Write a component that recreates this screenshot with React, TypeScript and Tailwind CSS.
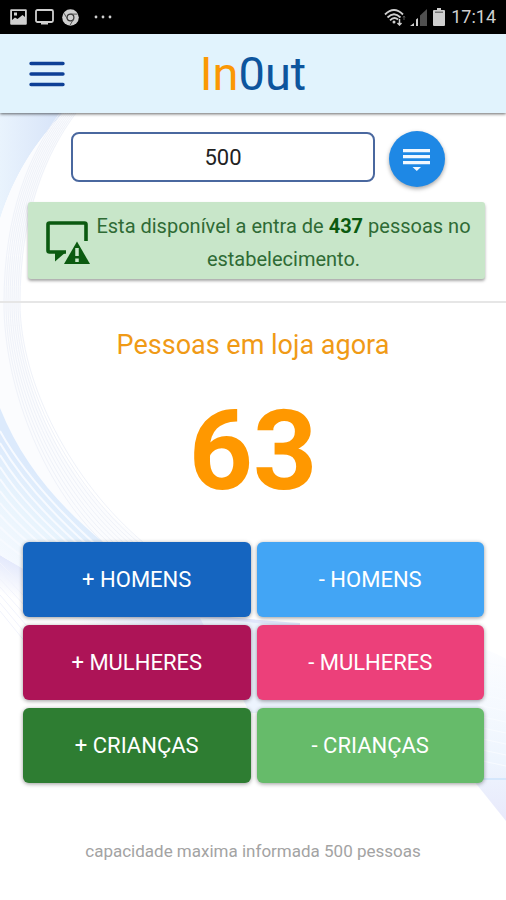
import { useState } from 'react'

const GROUPS = [
  { label: 'HOMENS', plus: 'bg-[#1565c0]', minus: 'bg-[#42a5f5]' },
  { label: 'MULHERES', plus: 'bg-[#ad1457]', minus: 'bg-[#ec407a]' },
  { label: 'CRIANÇAS', plus: 'bg-[#2e7d32]', minus: 'bg-[#66bb6a]' },
]

const range = (n: number) => Array.from({ length: n }, (_, i) => i)

/* Faint guilloche waves behind the content */
function Waves() {
  return (
    <svg className="absolute inset-0 -z-10 h-full w-full" viewBox="0 0 506 787" preserveAspectRatio="none" fill="none" aria-hidden="true">
      <defs>
        <linearGradient id="top" x1="0" y1="0" x2="1" y2="0">
          <stop offset="0" stopColor="#e9f3fd" />
          <stop offset="1" stopColor="#d6e3f8" />
        </linearGradient>
        <linearGradient id="low" gradientUnits="userSpaceOnUse" x1="50" y1="372" x2="-10" y2="440">
          <stop offset="0" stopColor="#dceafc" />
          <stop offset="0.4" stopColor="#e8f4fd" />
          <stop offset="1" stopColor="#f7faff" />
        </linearGradient>
        <linearGradient id="fold" gradientUnits="userSpaceOnUse" x1="14" y1="444" x2="0" y2="480">
          <stop offset="0" stopColor="#e0e6fb" />
          <stop offset="1" stopColor="#ffffff" />
        </linearGradient>
        <linearGradient id="side" x1="0" y1="0" x2="0" y2="1">
          <stop offset="0" stopColor="#fcfdff" />
          <stop offset="0.65" stopColor="#eef5fe" />
          <stop offset="1" stopColor="#e8e9fb" />
        </linearGradient>
      </defs>
      <path d="M0 0H63C35 30 14 62 0 106Z" fill="url(#top)" />
      <path d="M0 106C14 62 35 30 63 0H76C45 40 20 110 20 190C20 290 70 375 144 430H104C58 392 22 350 0 295Z" fill="#fbfcfe" />
      <path d="M0 442C60 480 150 500 300 510V540C160 530 60 530 24 500L0 478Z" fill="url(#fold)" />
      <path d="M0 295C22 350 58 392 104 430L200 490H80L0 442Z" fill="url(#low)" />
      <path d="M200 505C300 512 420 530 484 560V600H250Z" fill="#edf4fe" />
      <path d="M484 536C492 539 500 542 506 546V708L474 668Z" fill="url(#side)" />
      <path d="M478 666H506" stroke="#d5e7fc" strokeWidth="2" />
      {range(9).map(i => (
        <path
          key={i}
          d={`M${60 + i * 2} 0C${30 + i * 2} 40 ${4 + i * 2} 100 ${4 + i * 2} 190C${4 + i * 2} 270 ${40 + i * 4} 370 ${104 + i * 5} 430`}
          stroke="#eff2f9"
          strokeWidth="1"
        />
      ))}
      {range(10).map(i => (
        <path key={i} d={`M0 ${318 + i * 12}Q${30 - i} ${372 + i * 8} ${96 - i * 4} ${432 + i * 4}`} stroke="#f7faff" strokeWidth="2" />
      ))}
      {range(7).map(i => (
        <path key={i} d={`M0 ${450 + i * 8}L26 ${476 + i * 9}`} stroke="#f1f3fc" strokeWidth="1" />
      ))}
      {range(10).map(i => (
        <path key={i} d={`M478 ${548 + i * 11}L506 ${554 + i * 11}`} stroke="#f8fbff" strokeWidth="1" />
      ))}
    </svg>
  )
}

function StatusBar() {
  return (
    <div className="flex h-[34px] items-center justify-between bg-black px-2.5 text-[#cfcfcf]">
      <div className="flex items-center gap-2">
        <svg width="17" height="16" viewBox="0 0 17 16" aria-hidden="true">
          <path d="M1.200 .2h14.600q1 0 1 1v13.600q0 1-1 1H1.200q-1 0-1-1V1.200q0-1 1-1ZM2 2v9l3-2.500 2.500 1.500L12.500 6 15 8V2ZM4 3.500h3v3H4Z" fill="currentColor" fillRule="evenodd" />
        </svg>
        <svg width="19" height="16" viewBox="0 0 19 16" fill="none" aria-hidden="true">
          <rect x="1" y="1" width="17" height="12" rx="1.500" stroke="currentColor" strokeWidth="1.800" />
          <path d="M6 14.500h7" stroke="currentColor" strokeWidth="2" />
        </svg>
        <svg width="17" height="17" viewBox="0 0 17 17" fill="none" aria-hidden="true">
          <circle cx="8.500" cy="8.500" r="8.300" fill="currentColor" />
          <circle cx="8.500" cy="8.500" r="3.400" stroke="#333" strokeWidth="1.200" />
          <path d="M8.500 5.100H15.500M5.500 10.200 2 4.200M11.500 10.200 8 16.200" stroke="#555" strokeWidth="1" />
        </svg>
        <svg className="ml-1.5" width="20" height="4" viewBox="0 0 20 4" fill="currentColor" aria-hidden="true">
          <circle cx="3" cy="2" r="1.400" />
          <circle cx="10" cy="2" r="1.400" />
          <circle cx="17" cy="2" r="1.400" />
        </svg>
      </div>
      <div className="flex items-center gap-1">
        <svg width="22" height="18" viewBox="0 0 22 18" fill="none" stroke="currentColor" aria-hidden="true">
          <path d="M1 6.500Q10 -2.500 19 6.500M3.500 9.500Q10 3 16.500 9.500M6 12.300Q10 8.200 14 11.500" strokeWidth="1.800" />
          <circle cx="10" cy="14" r="1.500" fill="currentColor" stroke="none" />
          <path d="M15.500 11v6M13.500 15l2 2 2-2" strokeWidth="1.500" />
          <path d="M20 12V8M19 9.500l1-1.500 1 1.500" stroke="#555" />
        </svg>
        <svg width="17" height="17" viewBox="0 0 17 17" aria-hidden="true">
          <path d="M0 17 4 14v3ZM6 10.500 8 9v8H6Z" fill="currentColor" />
          <path d="M10 6.500 17 0v17h-7Z" fill="#505050" />
        </svg>
        <svg className="ml-0.5" width="12" height="18" viewBox="0 0 12 18" fill="currentColor" aria-hidden="true">
          <path d="M4 0h4v2h3q1 0 1 1v14q0 1-1 1H1q-1 0-1-1V3q0-1 1-1h3Z" />
          <path d="M2 3.500h8v1.500H2Z" fill="#777" />
        </svg>
        <span className="ml-0.5 text-lg leading-none">17:14</span>
      </div>
    </div>
  )
}

function AlertIcon() {
  return (
    <svg className="shrink-0" width="44" height="44" viewBox="0 0 44 44" fill="none" aria-hidden="true">
      <path d="M40 20V3.500Q40 2 38.500 2H3.500Q2 2 2 3.500V29.500Q2 31 3.500 31H20" stroke="#0b5a10" strokeWidth="3.600" />
      <path d="M9 31H20L9 40.500Z" fill="#0b5a10" />
      <path d="M31 16 15 44H47Z" fill="#c8e6c9" />
      <path d="M31 20.500 18 43H44Z" fill="#0b5a10" />
      <path d="M31 27v8M31 37.500v3.500" stroke="#c8e6c9" strokeWidth="3.500" />
    </svg>
  )
}

export default function App() {
  const [capacity, setCapacity] = useState('500')
  const [inside, setInside] = useState(63)

  return (
    <div className="flex min-h-screen flex-col bg-white font-['Roboto',sans-serif]">
      <StatusBar />

      {/* Header */}
      <header className="relative z-10 grid h-[79px] grid-cols-[1fr_auto_1fr] items-center bg-[#e1f3fd] px-[29px] shadow-[0_1px_3px_rgba(0,0,0,0.6)]">
        <button type="button" aria-label="Menu" className="w-9">
          <svg width="36" height="26" viewBox="0 0 36 26" stroke="#0d3f96" strokeWidth="3.400" strokeLinecap="round" aria-hidden="true">
            <path d="M2 2.500H34M2 13H34M2 23.500H34" />
          </svg>
        </button>
        <h1 className="text-[47px] leading-none text-[#0d559d]">
          <span className="text-[#fb9804]">In</span>0ut
        </h1>
      </header>

      <main className="relative isolate flex-1">
        <Waves />

        {/* Capacity */}
        <section className="border-b-2 border-[#e6e6e6] pb-[22px] pl-7 pr-[21px] pt-[18px]">
          <div className="flex items-center justify-between gap-3.5 pl-[43px] pr-10">
            <input
              type="text"
              aria-label="Capacidade"
              value={capacity}
              onChange={e => setCapacity(e.target.value)}
              className="mb-1 h-[50px] min-w-0 flex-1 rounded-lg border-2 border-[#4a689f] bg-white text-center text-[22px] text-[#222]"
            />
            <button
              type="button"
              aria-label="Informar capacidade"
              className="flex size-14 items-center justify-center rounded-full bg-[#1e88e5] shadow-[0_2px_4px_rgba(0,0,0,0.35)]"
            >
              <svg width="28" height="24" viewBox="0 0 28 24" fill="#f1f8ff" aria-hidden="true">
                <path d="M0 2h27v3.200H0ZM0 8h27v3.200H0ZM0 14h27v3.200H0ZM9.500 20h8.500l-4.200 4Z" />
              </svg>
            </button>
          </div>

          <div className="mt-[15px] flex h-[77px] items-center rounded-[3px] bg-[#c8e6c9] pl-[18px] pr-3.5 pt-1 shadow-[0_2px_3px_rgba(0,0,0,0.35)]">
            <AlertIcon />
            <p className="flex-1 pl-1.5 text-center text-xl leading-[33px] text-[#2f6b35]">
              Esta disponível a entra de <b className="text-[#0b5a10]">437</b> pessoas no estabelecimento.
            </p>
          </div>
        </section>

        {/* Counter */}
        <h2 className="mt-6 text-center text-[27px] leading-9 text-[#f09a16]">Pessoas em loja agora</h2>
        <p className="mt-[30px] text-center text-[112px] font-bold leading-[115px] text-[#ff9800]">{inside}</p>

        <div className="mt-[34px] flex flex-col gap-2 pl-[23px] pr-[22px]">
          {GROUPS.map(g => (
            <div key={g.label} className="grid grid-cols-2 gap-1.5 text-[22px] text-white">
              <button
                type="button"
                onClick={() => setInside(inside + 1)}
                className={`h-[75px] rounded-md shadow-[0_1px_4px_rgba(0,0,0,0.4)] ${g.plus}`}
              >
                + {g.label}
              </button>
              <button
                type="button"
                onClick={() => setInside(Math.max(0, inside - 1))}
                className={`h-[75px] rounded-md shadow-[0_1px_4px_rgba(0,0,0,0.4)] ${g.minus}`}
              >
                - {g.label}
              </button>
            </div>
          ))}
        </div>

        <p className="mt-14 text-center text-[17px] leading-6 text-[#a3a3a3]">
          capacidade maxima informada 500 pessoas
        </p>
      </main>
    </div>
  )
}
